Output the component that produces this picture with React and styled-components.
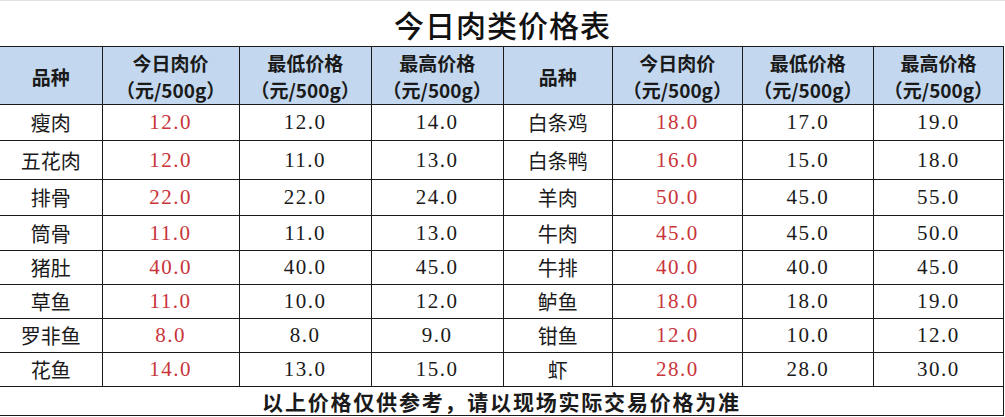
import styled, { createGlobalStyle } from "styled-components";

const GlobalStyle = createGlobalStyle`
  html, body {
    margin: 0;
    padding: 0;
    background: #ffffff;
  }
  body {
    font-family: "Noto Sans CJK SC", "Noto Sans", sans-serif;
    color: #111;
  }
`;

const columns = [102, 137, 132, 132, 109, 130, 131, 130];
const rowHeights = [36, 39, 36, 35, 34, 34, 34, 34];

const left = [
  ["瘦肉", "12.0", "12.0", "14.0"],
  ["五花肉", "12.0", "11.0", "13.0"],
  ["排骨", "22.0", "22.0", "24.0"],
  ["筒骨", "11.0", "11.0", "13.0"],
  ["猪肚", "40.0", "40.0", "45.0"],
  ["草鱼", "11.0", "10.0", "12.0"],
  ["罗非鱼", "8.0", "8.0", "9.0"],
  ["花鱼", "14.0", "13.0", "15.0"],
];

const right = [
  ["白条鸡", "18.0", "17.0", "19.0"],
  ["白条鸭", "16.0", "15.0", "18.0"],
  ["羊肉", "50.0", "45.0", "55.0"],
  ["牛肉", "45.0", "45.0", "50.0"],
  ["牛排", "40.0", "40.0", "45.0"],
  ["鲈鱼", "18.0", "18.0", "19.0"],
  ["钳鱼", "12.0", "10.0", "12.0"],
  ["虾", "28.0", "28.0", "30.0"],
];

const headers = [
  ["品种"],
  ["今日肉价", "（元/500g）"],
  ["最低价格", "（元/500g）"],
  ["最高价格", "（元/500g）"],
];

function App() {
  return (
    <Page>
      <GlobalStyle />
      <Title>今日肉类价格表</Title>
      <Table>
        <colgroup>
          {columns.map((w, i) => (
            <col key={i} style={{ width: w }} />
          ))}
        </colgroup>
        <thead>
          <tr>
            {[...headers, ...headers].map((h, i) => (
              <HeadCell key={i} $first={i === 0}>
                {h.map((line, j) => (
                  <HeadLine key={j}>{line}</HeadLine>
                ))}
              </HeadCell>
            ))}
          </tr>
        </thead>
        <tbody>
          {left.map((row, r) => (
            <Row key={r} $h={rowHeights[r]}>
              {[...row, ...right[r]].map((v, c) => {
                const kind = c % 4;
                if (kind === 0) {
                  return (
                    <NameCell key={c} $first={c === 0}>
                      {v}
                    </NameCell>
                  );
                }
                return (
                  <NumCell key={c} $today={kind === 1}>
                    {v}
                  </NumCell>
                );
              })}
            </Row>
          ))}
          <tr>
            <FootCell colSpan={8}>以上价格仅供参考，请以现场实际交易价格为准</FootCell>
          </tr>
        </tbody>
      </Table>
    </Page>
  );
}

export default App;

const Page = styled.div`
  width: 1005px;
  height: 417px;
  overflow: hidden;
  background: #fff;
  border-top: 1px solid #e2e2e2;
  box-sizing: border-box;
`;

const Title = styled.div`
  height: 45px;
  display: flex;
  align-items: center;
  justify-content: center;
  font-size: 30px;
  font-weight: 500;
  letter-spacing: 1px;
  color: #111;
`;

const Table = styled.table`
  width: 1004px;
  table-layout: fixed;
  border-collapse: collapse;
  border-top: 1px solid #111;
  font-family: "Noto Sans CJK SC", sans-serif;
`;

const HeadCell = styled.th`
  height: 56px;
  padding: 1px 0 0;
  background: #c3d8ee;
  border: 1px solid #1a1a1a;
  border-left: ${(p) => (p.$first ? "none" : "1px solid #1a1a1a")};
  font-size: 19px;
  font-weight: 700;
  color: #1a1a1a;
  text-align: center;
  vertical-align: middle;
`;

const HeadLine = styled.div`
  line-height: 27px;
  height: 27px;
  white-space: nowrap;
`;

const Row = styled.tr`
  height: ${(p) => p.$h}px;
`;

const NameCell = styled.td`
  padding: 0;
  border: 1px solid #1a1a1a;
  border-left: ${(p) => (p.$first ? "none" : "1px solid #1a1a1a")};
  font-size: 20px;
  font-weight: 400;
  color: #1a1a1a;
  text-align: center;
  vertical-align: middle;
`;

const NumCell = styled.td`
  padding: 0;
  border: 1px solid #1a1a1a;
  font-family: "Liberation Serif", "Times New Roman", serif;
  font-size: 21px;
  letter-spacing: 1.5px;
  color: ${(p) => (p.$today ? "#c8353a" : "#1a1a1a")};
  text-align: center;
  vertical-align: middle;
`;

const FootCell = styled.td`
  height: 28px;
  padding: 0;
  border: 1px solid #1a1a1a;
  border-left: none;
  font-size: 21px;
  font-weight: 700;
  letter-spacing: 1.8px;
  line-height: 26px;
  color: #1a1a1a;
  text-align: center;
  vertical-align: middle;
`;
